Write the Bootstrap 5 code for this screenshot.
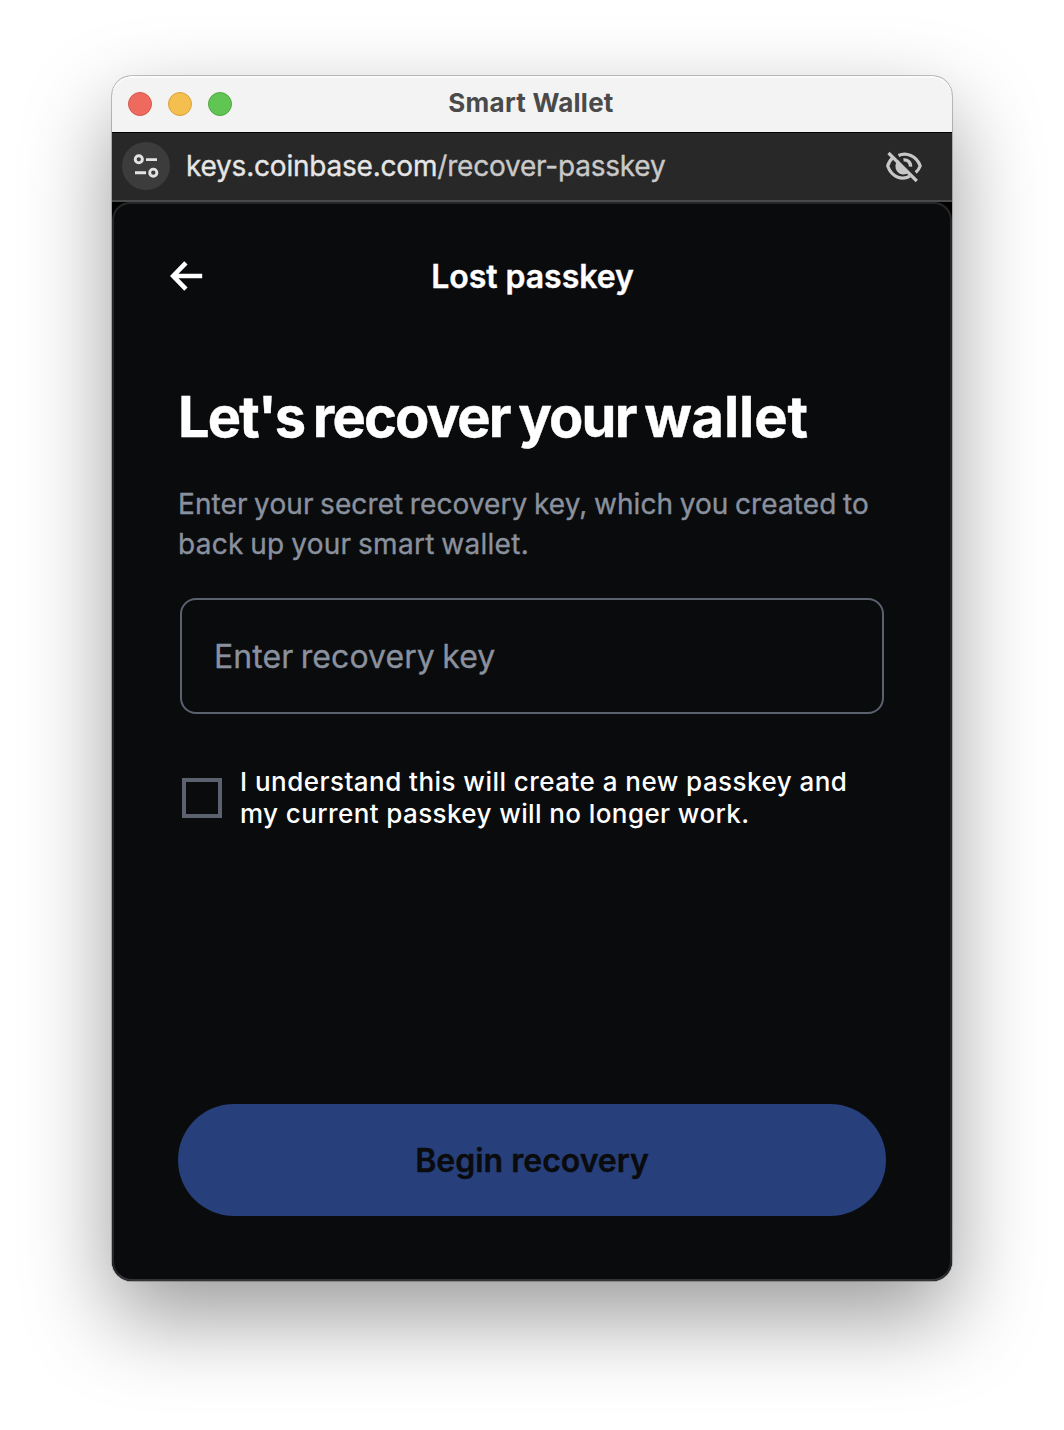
<!DOCTYPE html>
<html lang="en">
<head>
<meta charset="utf-8">
<meta name="viewport" content="width=device-width, initial-scale=1">
<title>Smart Wallet</title>
<link href="https://cdn.jsdelivr.net/npm/bootstrap@5.3.0/dist/css/bootstrap.min.css" rel="stylesheet">
<style>
body{font-family:Inter,"Liberation Sans",sans-serif;background:#fff;height:1430px;padding:76px 112px 0}
.app-window{width:840px;height:1205px;border-radius:20px;background:#0a0b0d;box-shadow:0 0 0 1px rgba(0,0,0,.22),0 36px 88px rgba(0,0,0,.4)}
.title-bar{height:56px;background:#f3f3f3;box-shadow:inset 0 2px 0 #fafafa;padding:0 16px;border-radius:20px 20px 0 0}
.lights{gap:16px;width:104px}
.light{width:24px;height:24px;border-radius:50%;border:1px solid}
.light-r{background:#ee6a5e;border-color:#d9574b}
.light-y{background:#f5bf4f;border-color:#d8a13e}
.light-g{background:#61c554;border-color:#4fa73f}
.win-title{font-size:26px;font-weight:700;color:#4a4a4a;line-height:1;letter-spacing:.25px;margin-top:-1px;margin-right:106px}
.url-bar{height:70px;background:#282828;border-top:1px solid #000;border-bottom:2px solid #494b4a;padding:0 28px 1px 10px}
.site-btn{width:48px;height:48px;border-radius:50%;background:#3c3c3c}
.url-text{font-size:28px;line-height:1;color:#e6e6e6;margin-left:16px;white-space:nowrap;letter-spacing:-.21px;-webkit-text-stroke:.35px}
.url-path{color:#c9c9c9}
.page-frame{background:#000;border-radius:0 0 20px 20px}
.page-view{background:#0a0b0d;border:2px solid #242627;border-bottom-color:#343438;border-radius:18px 18px 20px 20px;padding:0 64px 63px}
.page-head{height:60px;margin-top:42px}
.back-ico{margin-left:-9px}
.head-title{font-size:32px;font-weight:600;line-height:1;margin-right:24px;margin-top:2px;letter-spacing:-.05px;-webkit-text-stroke:.4px}
.main-title{font-size:56px;font-weight:700;line-height:64px;margin:79px 0 0;white-space:nowrap;letter-spacing:-1.85px;word-spacing:-2.8px;-webkit-text-stroke:.4px}
.title-end{letter-spacing:-.1px}
.intro{font-size:28px;line-height:40px;color:#8a919e;margin:35px 0 0;white-space:nowrap;word-spacing:-1.5px;-webkit-text-stroke:.35px}
.intro-a{letter-spacing:.1px}
.intro-b{letter-spacing:.28px}
.key-input,.key-input:focus{height:116px;width:704px;margin:34px 0 0 2px;border:2px solid #5b616e;border-radius:16px;background:#0a0b0d;color:#fff;font-size:32px;padding:0 32px;letter-spacing:.05px;word-spacing:-1.5px;-webkit-text-stroke:.3px}
.key-input::placeholder{color:#8a919e;opacity:1}
.agree-row{margin-top:52px;gap:18px;padding-left:4px}
.agree-box.form-check-input{width:40px;height:40px;margin:0;border:4px solid #5b616e;border-radius:0;background:#0a0b0d}
.agree-text{font-size:26px;line-height:32px;font-weight:500;white-space:nowrap}
.agree-a{letter-spacing:.46px}
.agree-b{letter-spacing:.4px}
.begin-btn{height:112px;border-radius:56px;background:#27407c;color:#0a0b0d;font-size:32px;font-weight:600;border:0;padding:1px 0 0;-webkit-text-stroke:.4px}
.ln{display:block;width:max-content}
</style>
</head>
<body>
<div class="app-window d-flex flex-column">
  <header class="title-bar d-flex align-items-center">
    <div class="lights d-flex"><span class="light light-r"></span><span class="light light-y"></span><span class="light light-g"></span></div>
    <div class="flex-grow-1 text-center"><span class="win-title d-inline-block">Smart Wallet</span></div>
  </header>
  <div class="url-bar d-flex align-items-center">
    <div class="site-btn d-flex align-items-center justify-content-center">
      <svg width="28" height="28" viewBox="0 0 28 28" fill="none" stroke="#e3e3e3" stroke-width="2.9"><circle cx="6.8" cy="7.3" r="3.6"/><path d="M14 7.6h11M3 20.7h11"/><circle cx="21.3" cy="20.7" r="3.6"/></svg>
    </div>
    <div class="url-text">keys.coinbase.com<span class="url-path">/recover-passkey</span></div>
    <svg class="ms-auto" width="40" height="36" viewBox="0 0 40 36" fill="none" stroke="#c7c7c7" stroke-width="3.2"><path d="M14.5 7.5C22 4 32.500 7.500 36.200 18C35.200 20.600 33.700 22.700 31.700 24.500M9 9.500C6.400 11.700 4.600 14.600 3.700 18C7.800 29.500 18 32.200 25.800 28.300"/><path d="M19.500 11.900C23.500 11.400 26.900 14.500 26.500 18.700" stroke-width="3.400"/><path d="M14.200 12.200A7.700 7.700 0 0 0 24.800 24.500Z" fill="#c7c7c7" stroke="none"/><path d="M4.500 5L32.800 33" stroke-width="3.200"/></svg>
  </div>
  <div class="page-frame flex-grow-1 d-flex">
  <main class="page-view flex-grow-1 d-flex flex-column text-white">
    <div class="page-head d-flex align-items-center">
      <svg class="back-ico" width="34" height="34" viewBox="0 0 34 34" fill="none" stroke="#fff" stroke-width="4.600"><path d="M16.900 3.800L4.200 17L16.900 30.200M4.500 17H33.200"/></svg>
      <div class="flex-grow-1 text-center"><span class="head-title d-inline-block">Lost passkey</span></div>
    </div>
    <h1 class="main-title">Let's recover your <span class="title-end">wallet</span></h1>
    <p class="intro"><span class="ln intro-a">Enter your secret recovery key, which you created to</span><span class="ln intro-b">back up your smart wallet.</span></p>
    <input class="key-input form-control" type="text" placeholder="Enter recovery key">
    <label class="agree-row d-flex align-items-center"><input class="agree-box form-check-input" type="checkbox"><span class="agree-text"><span class="ln agree-a">I understand this will create a new passkey and</span><span class="ln agree-b">my current passkey will no longer work.</span></span></label>
    <button class="begin-btn btn w-100 mt-auto" type="button">Begin recovery</button>
  </main>
  </div>
</div>
<script src="https://cdn.jsdelivr.net/npm/bootstrap@5.3.0/dist/js/bootstrap.bundle.min.js"></script>
</body>
</html>
